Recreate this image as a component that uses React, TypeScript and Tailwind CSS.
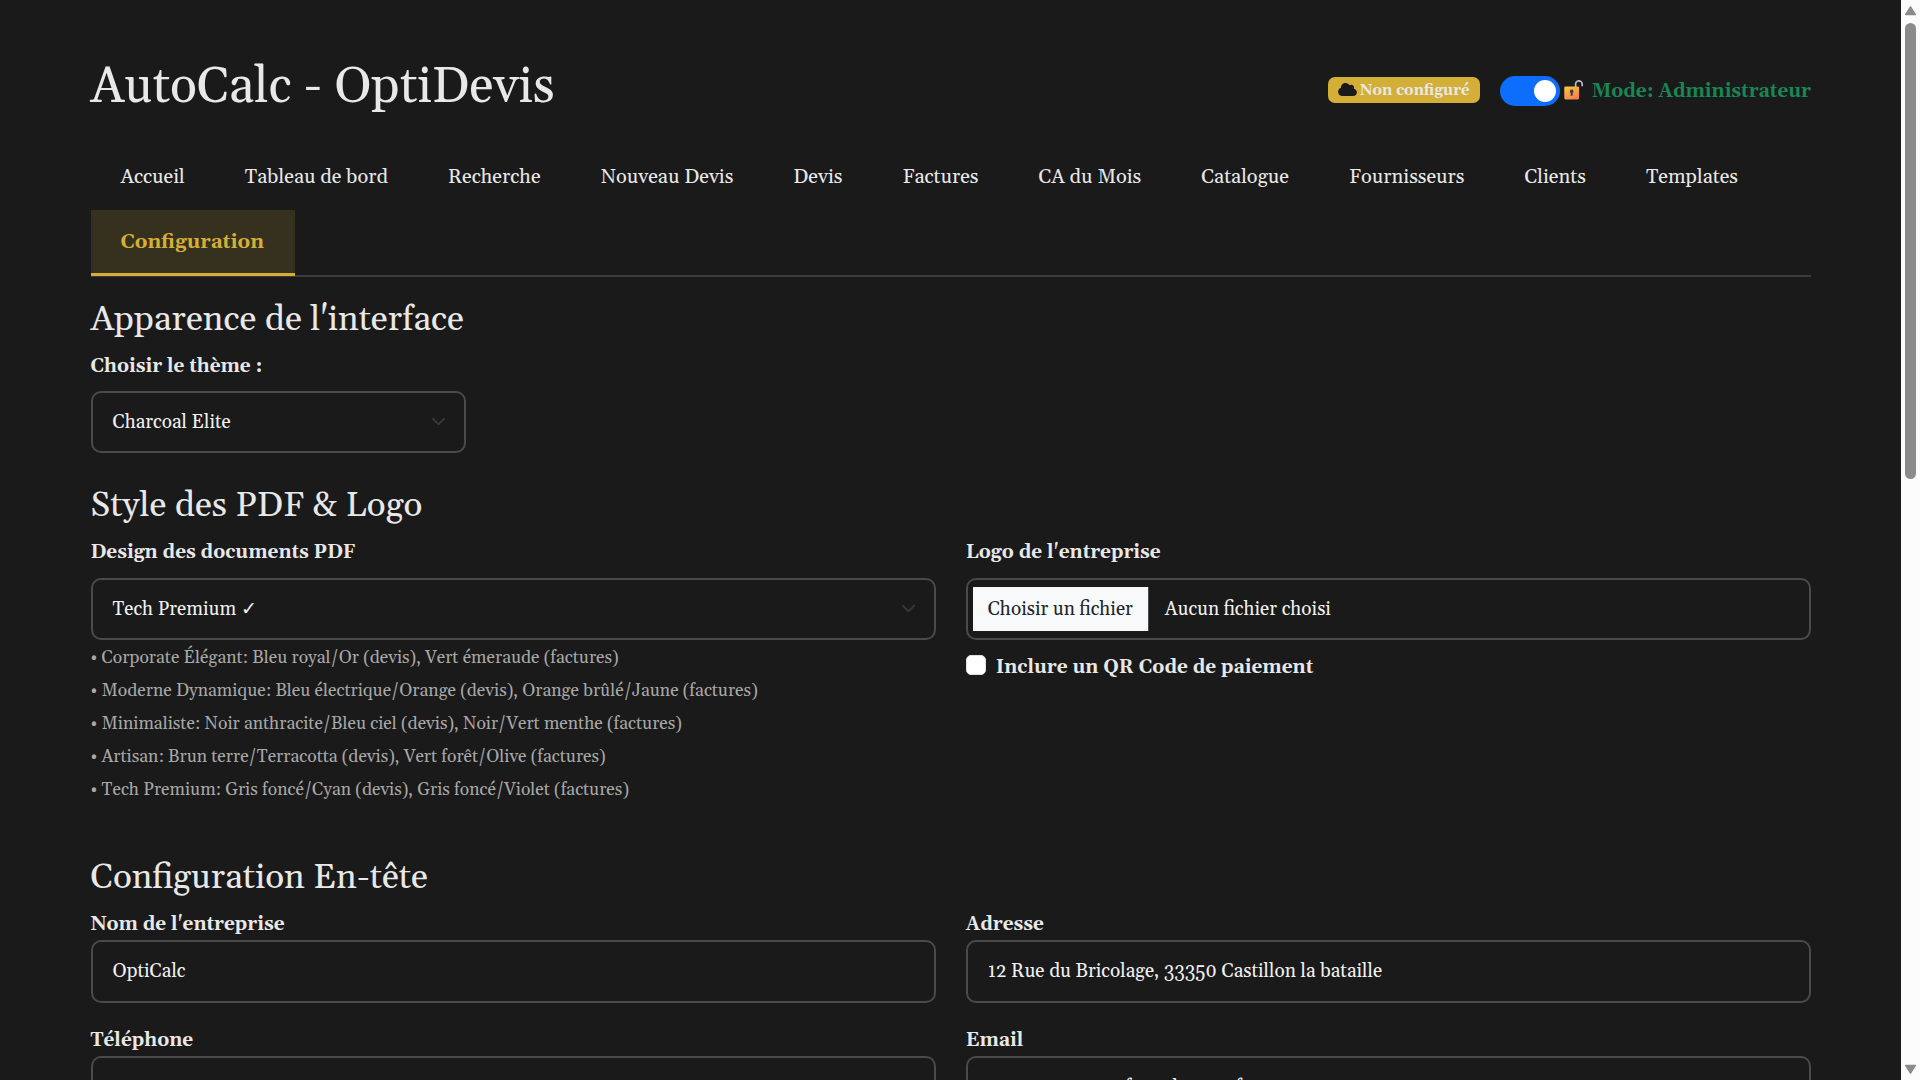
import type { ReactNode } from "react";
import { FaCloud } from "react-icons/fa6";

const tabs = [
  "Accueil",
  "Tableau de bord",
  "Recherche",
  "Nouveau Devis",
  "Devis",
  "Factures",
  "CA du Mois",
  "Catalogue",
  "Fournisseurs",
  "Clients",
  "Templates",
];

const designs = [
  "Corporate Élégant: Bleu royal/Or (devis), Vert émeraude (factures)",
  "Moderne Dynamique: Bleu électrique/Orange (devis), Orange brûlé/Jaune (factures)",
  "Minimaliste: Noir anthracite/Bleu ciel (devis), Noir/Vert menthe (factures)",
  "Artisan: Brun terre/Terracotta (devis), Vert forêt/Olive (factures)",
  "Tech Premium: Gris foncé/Cyan (devis), Gris foncé/Violet (factures)",
];

function OpenLock() {
  return (
    <svg width="20" height="20" viewBox="0 0 20 20" className="shrink-0">
      <defs>
        <linearGradient id="lock-body" x1="0" y1="0" x2="0.6" y2="1">
          <stop offset="0" stopColor="#ffcb3d" />
          <stop offset="1" stopColor="#f4824f" />
        </linearGradient>
      </defs>
      <path d="M11.6 8V4.1a3.3 3.3 0 0 1 6.6 0v2.2" fill="none" stroke="#b9b3c4" strokeWidth="1.7" />
      <rect x="0.3" y="6.4" width="14.8" height="13" rx="1.4" fill="url(#lock-body)" />
      <path d="M7.7 9.6a1.9 1.9 0 0 1 1 3.5v2.6h-2v-2.6a1.9 1.9 0 0 1 1-3.5z" fill="#433b4b" />
    </svg>
  );
}

function Chevron() {
  return (
    <svg width="15" height="15" viewBox="0 0 16 16" className="mr-[3.5px] mb-px shrink-0">
      <path d="m2 5 6 6 6-6" fill="none" stroke="#343a40" strokeWidth="2" strokeLinecap="round" strokeLinejoin="round" />
    </svg>
  );
}

function Heading({ children }: { children: ReactNode }) {
  return <h3 className="h-[42px] pt-[2px] text-[35px] leading-[42px] text-[#e8e8e8]">{children}</h3>;
}

function Label({ children }: { children: ReactNode }) {
  return <label className="block h-[30px] pt-px text-[19px] leading-[30px] font-bold text-[#e8e8e8]">{children}</label>;
}

function Select({ children }: { children: ReactNode }) {
  return (
    <div className="flex h-[62px] w-full items-center justify-between rounded-[10px] border-2 border-[#4a4a4a] pr-[14px] pl-5 text-[19px] leading-[30px] text-[#f0f0f0]">
      <span>{children}</span>
      <Chevron />
    </div>
  );
}

function Field({ label, value }: { label: string; value: string }) {
  return (
    <div className="flex flex-col gap-0.5">
      <Label>{label}</Label>
      <div className="flex h-[63px] items-center rounded-[10px] border-2 border-[#4a4a4a] px-5 pb-px text-[19px] leading-[30px] text-[#f0f0f0]">
        {value}
      </div>
    </div>
  );
}

function Scrollbar() {
  return (
    <div className="flex h-full w-[19px] shrink-0 flex-col items-center bg-[#fcfcfc] pt-[5px] pb-[5px]">
      <svg width="13" height="11" viewBox="0 0 13 11">
        <path d="M6.5 1.8 11.4 9.6H1.6z" fill="#8b8b8b" stroke="#8b8b8b" strokeWidth="1.4" strokeLinejoin="round" />
      </svg>
      <div className="mt-[7px] h-[456px] w-[11px] rounded-full bg-[#8b8b8b]" />
      <svg width="13" height="11" viewBox="0 0 13 11" className="mt-auto">
        <path d="M6.5 9.2 11.4 1.4H1.6z" fill="#8b8b8b" stroke="#8b8b8b" strokeWidth="1.4" strokeLinejoin="round" />
      </svg>
    </div>
  );
}

export default function App() {
  return (
    <div className="flex h-[1080px] w-full overflow-hidden bg-[#1a1a1a] font-[Gelasio,Georgia,'Liberation_Serif',serif] text-[#e8e8e8]">
      <main className="min-w-0 flex-1 pt-[55px] pr-[90px] pl-[90.5px]">
        <header className="flex h-[60px] justify-between">
          <h1 className="pt-[3px] text-[50px] leading-[60px]">AutoCalc - OptiDevis</h1>
          <div className="mt-[20px] flex h-8 items-center">
            <div className="mb-[2px] flex h-[26px] w-[152px] items-center justify-center gap-[3px] rounded-[7px] bg-[#d4af37] text-[15px] leading-[26px] font-bold">
              <FaCloud className="mb-[1px] h-[15px] w-[19px] text-[#1a1a1a]" />
              <span className="pt-px">Non configuré</span>
            </div>
            <div className="ml-5 flex h-[30px] w-[60px] items-center justify-end rounded-full bg-[#0d6efd] pr-1">
              <div className="size-[22px] rounded-full bg-white" />
            </div>
            <div className="mb-[2px] ml-1 flex items-center">
              <OpenLock />
              <span className="ml-2 pt-px text-[19px] leading-[30px] font-bold text-[#198754]">Mode: Administrateur</span>
            </div>
          </div>
        </header>

        <nav className="mt-[29px] flex h-[133px] flex-wrap content-start border-b-2 border-[#3a3a3a] text-[20px] leading-[33px]">
          {tabs.map((tab) => (
            <a key={tab} className="h-[66px] px-[30px] pt-[17px] whitespace-nowrap">
              {tab}
            </a>
          ))}
          <a className="h-[66px] w-[204.5px] border-b-[3px] border-[#d4af37] bg-[#d4af37]/15 px-[30px] pt-4 font-bold text-[#d4af37]">
            Configuration
          </a>
        </nav>

        <section className="mt-5 flex flex-col">
          <Heading>Apparence de l'interface</Heading>
          <div className="mt-[11px] flex w-[375px] flex-col gap-[11px]">
            <Label>Choisir le thème :</Label>
            <Select>Charcoal Elite</Select>
          </div>
        </section>

        <section className="mt-[30px] flex h-[372px] flex-col">
          <Heading>Style des PDF &amp; Logo</Heading>
          <div className="mt-[11px] grid grid-cols-2 gap-[30px]">
            <div>
              <Label>Design des documents PDF</Label>
              <div className="mt-3">
                <Select>Tech Premium ✓</Select>
              </div>
              <ul className="pt-[2px] text-[17.5px] leading-[33px] text-[#a8a8a8]">
                {designs.map((d) => (
                  <li key={d}>• {d}</li>
                ))}
              </ul>
            </div>
            <div>
              <Label>Logo de l'entreprise</Label>
              <div className="mt-3 flex h-[62px] items-center rounded-[10px] border-2 border-[#4a4a4a] pl-[5px] text-[19px] leading-[44px] text-[#f0f0f0]">
                <span className="h-[44px] w-[176px] border-r border-[#4a4a4a] bg-[#f8f9fa] text-center text-[#212529]">
                  Choisir un fichier
                </span>
                <span className="ml-4">Aucun fichier choisi</span>
              </div>
              <div className="mt-[11px] flex items-start gap-[10px]">
                <span className="mt-1 size-5 rounded-[5px] border border-[#dee2e6] bg-white" />
                <Label>Inclure un QR Code de paiement</Label>
              </div>
            </div>
          </div>
        </section>

        <section className="flex flex-col">
          <Heading>Configuration En-tête</Heading>
          <div className="mt-[11px] grid grid-cols-2 gap-x-[30px] gap-y-[21px]">
            <Field label="Nom de l'entreprise" value="OptiCalc" />
            <Field label="Adresse" value="12 Rue du Bricolage, 33350 Castillon la bataille" />
            <Field label="Téléphone" value="" />
            <Field label="Email" value="contact.maco.enfoncnlannne.fr" />
          </div>
        </section>
      </main>
      <Scrollbar />
    </div>
  );
}
